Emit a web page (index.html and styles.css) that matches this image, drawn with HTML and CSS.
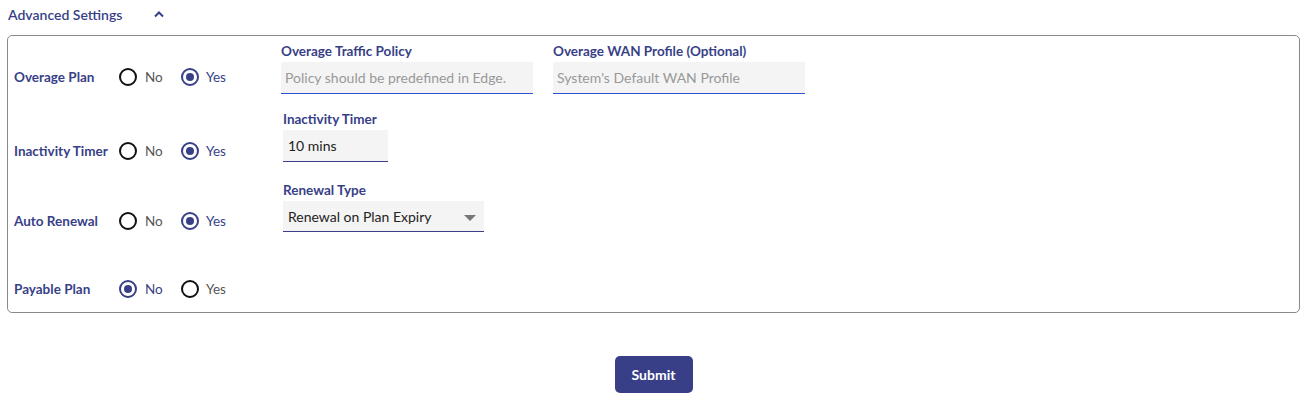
FILE: index.html
```html
<!DOCTYPE html>
<html>
<head>
  <link rel="stylesheet" href="styles.css">
</head>
<body>

  <div class="section-head">
    <span class="section-title">Advanced Settings</span>
    <svg class="chevron" width="12" height="8" viewBox="0 0 12 8"><path d="M2 6.5 L6 2.5 L10 6.5" fill="none" stroke="#383f87" stroke-width="2"/></svg>
  </div>

  <div class="settings-box">

    <div class="row row-first">
      <div class="choice">
        <span class="row-label">Overage Plan</span>
        <span class="radio"></span><span class="opt opt-no">No</span>
        <span class="radio checked"></span><span class="opt">Yes</span>
      </div>
      <div class="field field-wide">
        <p class="field-label">Overage Traffic Policy</p>
        <div class="input input-locked">Policy should be predefined in Edge.</div>
      </div>
      <div class="field field-wide">
        <p class="field-label">Overage WAN Profile (Optional)</p>
        <div class="input input-locked">System's Default WAN Profile</div>
      </div>
    </div>

    <div class="row">
      <div class="choice">
        <span class="row-label">Inactivity Timer</span>
        <span class="radio"></span><span class="opt opt-no">No</span>
        <span class="radio checked"></span><span class="opt">Yes</span>
      </div>
      <div class="field field-shift">
        <p class="field-label">Inactivity Timer</p>
        <div class="input input-short">10 mins</div>
      </div>
    </div>

    <div class="row row-renewal">
      <div class="choice">
        <span class="row-label">Auto Renewal</span>
        <span class="radio"></span><span class="opt opt-no">No</span>
        <span class="radio checked"></span><span class="opt">Yes</span>
      </div>
      <div class="field field-shift">
        <p class="field-label">Renewal Type</p>
        <div class="input input-select">Renewal on Plan Expiry<span class="caret"></span></div>
      </div>
    </div>

    <div class="row row-last">
      <div class="choice">
        <span class="row-label">Payable Plan</span>
        <span class="radio checked"></span><span class="opt opt-no">No</span>
        <span class="radio"></span><span class="opt">Yes</span>
      </div>
    </div>

  </div>

  <div class="actions">
    <button class="submit-btn">Submit</button>
  </div>

</body>
</html>
```

FILE: styles.css
```css
body {
  margin: 0 7px;
  font-family: Lato, "Open Sans", sans-serif;
  font-size: 13px;
  color: #333;
  background: #fff;
}

/* Collapsible header */
.section-head {
  display: flex;
  align-items: center;
  height: 28px;
  padding-left: 1px;
}

.section-title {
  color: #383f87;
  font-weight: 600;
  font-size: 14px;
}

.chevron {
  margin-left: 31px;
  margin-top: -1px;
}

.settings-box {
  margin-top: 7px;
  border: 1px solid #8a8a8a;
  border-radius: 5px;
  padding: 8px 6px 12px;
}

.row {
  display: flex;
  align-items: flex-end;
  margin-top: 18px;
}

.row-first {
  margin-top: 0;
}

.row-renewal {
  margin-top: 21px;
}

.row-last {
  margin-top: 48px;
}

.choice {
  display: flex;
  align-items: center;
  width: 267px;
  height: 18px;
  margin-bottom: 2px;
  flex-shrink: 0;
}

.row-first .choice {
  margin-bottom: 8px;
}

.row-label {
  width: 105px;
  color: #383f87;
  font-weight: 700;
  font-size: 13.5px;
}

.radio {
  box-sizing: border-box;
  width: 18px;
  height: 18px;
  border: 2px solid #111;
  border-radius: 50%;
  position: relative;
  flex-shrink: 0;
}

.radio.checked {
  border-color: #383f87;
}

.radio.checked::after {
  content: "";
  position: absolute;
  left: 3px;
  top: 3px;
  width: 8px;
  height: 8px;
  border-radius: 50%;
  background: #383f87;
}

.opt {
  margin-left: 7px;
  color: #555;
  font-size: 13.5px;
}

.radio.checked + .opt {
  color: #383f87;
}

.opt-no {
  width: 36px;
  margin-left: 8px;
}

.field {
  margin-right: 20px;
}

.field-shift {
  margin-left: 2px;
}

.field-label {
  margin: 0 0 4px;
  height: 14px;
  line-height: 14px;
  color: #383f87;
  font-weight: 700;
  font-size: 13.5px;
}

.input {
  box-sizing: border-box;
  height: 32px;
  line-height: 31px;
  padding: 0 5px;
  background: #f4f4f4;
  border-bottom: 1px solid #3b4fc4;
  color: #222;
  font-size: 14px;
  white-space: nowrap;
}

.input-locked {
  width: 252px;
  padding-left: 4px;
  color: #999;
  border-bottom-color: #2c53d6;
}

.input-short {
  width: 105px;
  border-bottom-color: #383f87;
}

.input-select {
  width: 201px;
  height: 31px;
  position: relative;
  border-bottom-color: #383f87;
}

.caret {
  position: absolute;
  right: 8px;
  top: 14px;
  border-left: 6px solid transparent;
  border-right: 6px solid transparent;
  border-top: 6px solid #777;
}

.actions {
  display: flex;
  justify-content: center;
  margin-top: 43px;
}

.submit-btn {
  width: 78px;
  height: 37px;
  border: none;
  border-radius: 5px;
  background: #383f87;
  color: #fff;
  font-family: Lato, "Open Sans", sans-serif;
  font-weight: 700;
  font-size: 14px;
}
```
